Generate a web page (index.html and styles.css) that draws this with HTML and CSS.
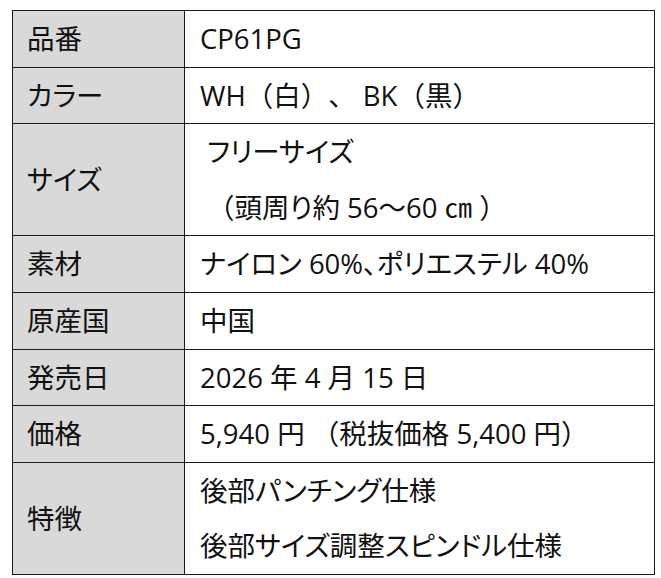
FILE: index.html
```html
<!DOCTYPE html>
<html lang="ja">
<head>
<meta charset="utf-8">
<link rel="stylesheet" href="styles.css">
</head>
<body>
<table class="spec">
  <tr><th>品番</th><td>CP61PG</td></tr>
  <tr><th><span class="k">カラー</span></th><td>WH（白）、 BK（黒）</td></tr>
  <tr><th><span class="k">サイズ</span></th><td class="size"><div class="l1"><span class="k">フリーサイズ</span></div><div class="l2">（頭周<span class="k">り</span>約 56～60 ㎝ ）</div></td></tr>
  <tr><th>素材</th><td><span class="k">ナイロン</span> 60%<span class="k">、ポリエステル</span> 40%</td></tr>
  <tr><th>原産国</th><td>中国</td></tr>
  <tr><th>発売日</th><td>2026 年 4 月 15 日</td></tr>
  <tr><th>価格</th><td>5,940 円 （税抜価格 5,400 円）</td></tr>
  <tr><th>特徴</th><td><div>後部<span class="k">パンチング</span>仕様</div><div>後部<span class="k">サイズ</span>調整<span class="k">スピンドル</span>仕様</div></td></tr>
</table>
</body>
</html>
```
FILE: styles.css
```css
html, body {
  margin: 0;
  padding: 0;
  background: #ffffff;
}
body {
  padding: 10px 0 0 12px;
  font-family: "Open Sans", "Noto Sans CJK JP", sans-serif;
  color: #111111;
}
.spec {
  border-collapse: collapse;
  width: 643px;
  font-size: 27.5px;
  line-height: 55.6px;
  text-spacing-trim: space-all;
}
.spec th, .spec td {
  border: 1px solid #1a1a1a;
  padding: 0 0 0 15px;
  text-align: left;
  vertical-align: middle;
  font-weight: 400;
  white-space: nowrap;
}
.spec th {
  width: 157px;
  background: #d9d9d9;
  padding-left: 14px;
}
.spec td {
  background: #ffffff;
}
.k {
  font-feature-settings: "palt";
}
.size .l1 {
  padding-left: 7px;
}
.size .l2 {
  padding-left: 7px;
}
```
